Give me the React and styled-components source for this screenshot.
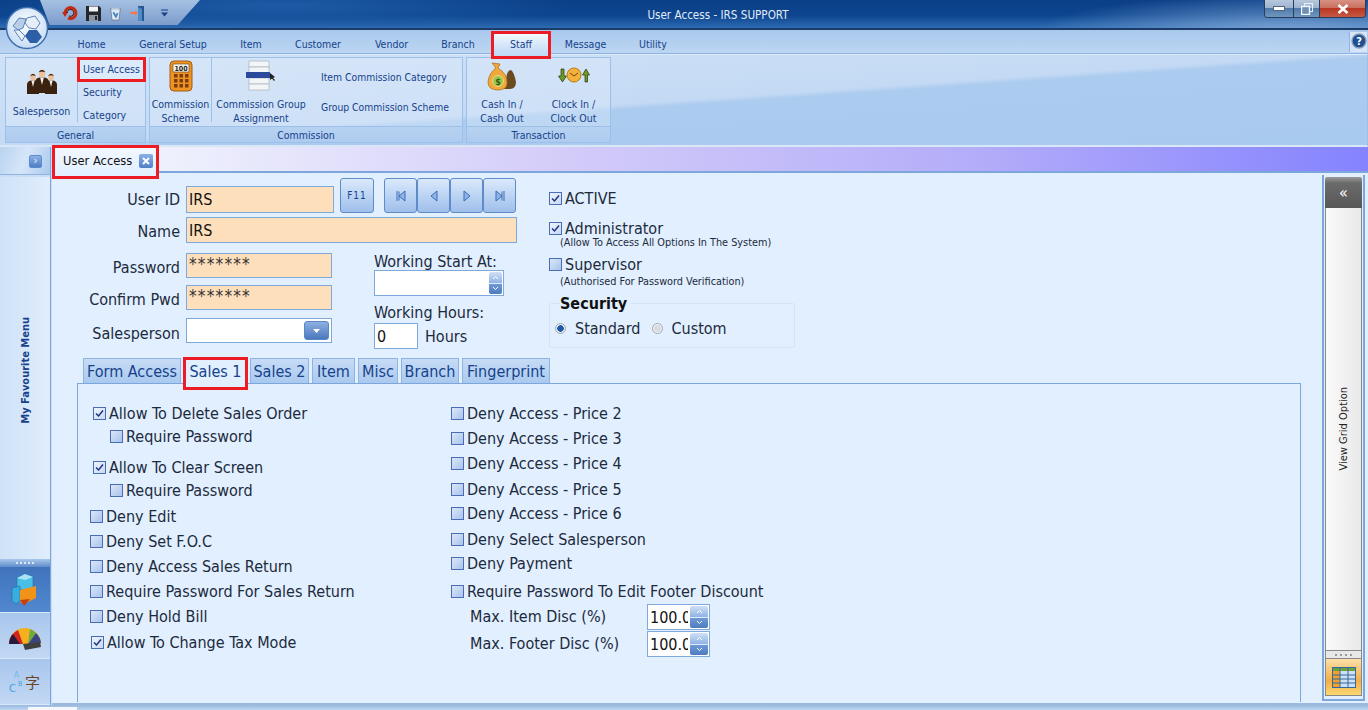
import React from "react";
import styled, { createGlobalStyle } from "styled-components";

const FONT = `"DejaVu Sans Condensed", "DejaVu Sans", "Noto Sans", sans-serif`;

const Global = createGlobalStyle`
  html, body {
    margin: 0;
    padding: 0;
    width: 1368px;
    height: 710px;
    overflow: hidden;
    font-family: ${FONT};
    font-stretch: condensed;
  }
  * { box-sizing: border-box; }
`;

const Window = styled.div`
  position: relative;
  width: 1368px;
  height: 710px;
  display: flex;
  flex-direction: column;
  overflow: hidden;
  background: #c9def5;
`;

/* ---------- title bar ---------- */

const TitleBar = styled.div`
  position: relative;
  height: 30px;
  flex: none;
  display: flex;
  align-items: flex-start;
  padding-left: 60px;
  background:
    radial-gradient(ellipse 260px 40px at 1290px 34px, #7ea7d6 0%, rgba(126, 167, 214, 0) 100%),
    radial-gradient(ellipse 300px 26px at 280px 6px, #1d5aa6 0%, rgba(29, 90, 166, 0) 100%),
    linear-gradient(180deg, #0b3f86 0%, #0d458f 55%, #2d6bb2 100%);
  border-bottom: 2px solid #1b3a66;
`;

const QuickAccess = styled.div`
  position: absolute;
  left: 40px;
  top: 0;
  width: 160px;
  height: 25px;
  background: linear-gradient(180deg, #a5c1e2 0%, #7c9ccb 100%);
  clip-path: polygon(0 0, 100% 0, 86% 100%, 6% 100%);
`;

const QuickIcons = styled.div`
  position: relative;
  display: flex;
  align-items: center;
  gap: 6px;
  height: 26px;
  padding-left: 2px;
`;

const QuickIcon = styled.svg`
  width: ${(p) => p.$w || 17}px;
  height: 17px;
  display: block;
  margin-left: ${(p) => p.$ml || 0}px;
`;

const WindowTitle = styled.div`
  position: absolute;
  left: 0;
  right: 0;
  top: 7px;
  padding-left: 68px;
  text-align: center;
  font-size: 11.6px;
  line-height: 16px;
  color: #e3ecfa;
`;

const WindowButtons = styled.div`
  position: relative;
  margin-left: auto;
  margin-right: 2px;
  display: flex;
  height: 18px;
  border: 1px solid #2a3e5c;
  border-top: 0;
  border-radius: 0 0 4px 4px;
  overflow: hidden;
`;

const WinButton = styled.div`
  width: ${(p) => p.$w}px;
  display: flex;
  align-items: center;
  justify-content: center;
  background: ${(p) =>
    p.$close
      ? "linear-gradient(180deg,#d99184 0%,#c8705e 45%,#b93722 50%,#c75a44 100%)"
      : "linear-gradient(180deg,#b6c8dd 0%,#9db4d0 45%,#4f7bab 50%,#6f96bf 100%)"};
  border-left: ${(p) => (p.$first ? "0" : "1px solid #2a3e5c")};
`;

const Orb = styled.svg`
  position: absolute;
  left: 5px;
  top: 6px;
  width: 44px;
  height: 44px;
`;

/* ---------- menu tabs ---------- */

const MenuBar = styled.div`
  height: 24px;
  flex: none;
  display: flex;
  align-items: stretch;
  padding: 2px 1px 0 62px;
  background: linear-gradient(180deg, #a8c8ec 0%, #bcd6f2 100%);
  border-bottom: 1px solid #8fb4e3;
`;

const MenuTab = styled.div`
  width: ${(p) => p.$w}px;
  display: flex;
  align-items: center;
  justify-content: center;
  padding-top: 3px;
  font-size: 10.5px;
  color: #15428b;
  position: relative;
  ${(p) =>
    p.$active &&
    `
    padding: 0 0 3px;
    margin-left: 1px;
    margin-right: -1px;
    background: linear-gradient(180deg,#f2f8fe 0%,#cfe2f8 60%,#bcd6f3 100%);
    border: 1px solid #9dbfe8;
    border-bottom: 0;
    outline: 3px solid #ed1c24;
    outline-offset: -1px;
    height: 24px;
    margin-top: 1px;
  `}
`;

const HelpButton = styled.div`
  margin-left: auto;
  width: 18px;
  height: 20px;
  padding: 1px;
  background: #d6e6f8;
  border-left: 1px solid #8fb4e3;
`;

/* ---------- ribbon ---------- */

const Ribbon = styled.div`
  height: 93px;
  flex: none;
  display: flex;
  gap: 3px;
  padding: 2px 5px 2px 5px;
  background: linear-gradient(176deg, #d0e2f7 0%, #c4daf4 50%, #abcbef 53%, #a9caef 100%);
  border: 1px solid #9dbfe8;
  border-top-color: #dcebfb;
  border-left: 0;
  border-bottom: 2px solid #d8e6f6;
`;

const Group = styled.div`
  width: ${(p) => p.$w}px;
  display: flex;
  flex-direction: column;
  border: 1px solid #9cc0ea;
  background: rgba(225, 238, 252, 0.35);
`;

const GroupBody = styled.div`
  flex: 1;
  display: flex;
  min-height: 0;
`;

const GroupCaption = styled.div`
  height: 16px;
  flex: none;
  text-align: center;
  font-size: 10.5px;
  line-height: 16px;
  color: #15428b;
  background: linear-gradient(180deg, #b7d2f1 0%, #aecbef 100%);
  border-top: 1px solid #9cc0ea;
`;

const BigButton = styled.div`
  width: ${(p) => p.$w}px;
  flex: none;
  display: flex;
  flex-direction: column;
  align-items: center;
  padding-top: ${(p) => p.$top || 0}px;
  font-size: 10.5px;
  line-height: 14px;
  text-align: center;
  color: #15428b;
  ${(p) => p.$sep && `border-right: 1px solid #9cc0ea; margin-bottom: 4px;`}
`;

const BigIcon = styled.svg`
  width: ${(p) => p.$size || 34}px;
  height: ${(p) => p.$size || 34}px;
  display: block;
  flex: none;
  margin-bottom: ${(p) => p.$mb || 0}px;
`;

const SmallList = styled.div`
  flex: 1;
  display: flex;
  flex-direction: column;
  align-items: stretch;
`;

const SmallItem = styled.div`
  height: 23px;
  line-height: 23px;
  padding-left: 5px;
  font-size: 10.5px;
  color: #15428b;
  white-space: nowrap;
  ${(p) =>
    p.$marked &&
    `
    height: 24px;
    outline: 3px solid #ed1c24;
    outline-offset: -2px;
    background: #dcebfb;
  `}
`;

const CommissionLinks = styled.div`
  flex: 1;
  display: flex;
  flex-direction: column;
  gap: 16px;
  padding: 12px 0 0 11px;
  font-size: 10.3px;
  line-height: 14px;
  color: #15428b;
  white-space: nowrap;
`;

/* ---------- workspace ---------- */

const Workspace = styled.div`
  flex: 1;
  display: flex;
  min-height: 0;
`;

const Footer = styled.div`
  height: 5px;
  flex: none;
  padding: 2px 0 0 28px;
  background: linear-gradient(180deg, #9ab9dd 0%, #bcd6f2 100%);
`;

const FooterTab = styled.div`
  width: 49px;
  height: 3px;
  background: #f4f8fd;
`;

const Sidebar = styled.div`
  width: 51px;
  flex: none;
  display: flex;
  flex-direction: column;
  border-right: 1px solid #7da6dc;
`;

const SidebarTop = styled.div`
  height: 28px;
  flex: none;
  display: flex;
  align-items: center;
  justify-content: flex-end;
  padding: 2px 8px 0 0;
  background: linear-gradient(110deg, #b9d3f0 0%, #d6e6f9 50%, #a9c9ee 100%);
  border-bottom: 1px solid #8fb4e3;
`;

const ExpandButton = styled.div`
  width: 13px;
  height: 13px;
  border-radius: 2px;
  background: linear-gradient(180deg, #8fb2e4 0%, #4d7fc6 100%);
  border: 1px solid #5d8ccc;
  color: #fff;
  font-size: 10px;
  line-height: 10px;
  text-align: center;
`;

const FavouriteBar = styled.div`
  flex: 1;
  display: flex;
  align-items: center;
  justify-content: center;
  margin-top: 2px;
  padding-top: 4px;
  background: linear-gradient(90deg, #cfe2f8 0%, #e0edfc 100%);
`;

const VerticalLabel = styled.div`
  writing-mode: vertical-rl;
  transform: rotate(180deg);
  font-size: 11px;
  font-weight: ${(p) => p.$weight || 400};
  color: ${(p) => p.$color || "#15428b"};
  white-space: nowrap;
`;

const Grip = styled.div`
  height: 8px;
  flex: none;
  display: flex;
  align-items: center;
  justify-content: center;
  gap: 2px;
  background: linear-gradient(180deg, #a9c7ec 0%, #5f8ccb 100%);
`;

const GripDot = styled.span`
  width: 2px;
  height: 2px;
  background: ${(p) => p.$color || "#dbe8f8"};
`;

const NavTile = styled.div`
  height: 46px;
  flex: none;
  display: flex;
  align-items: center;
  justify-content: center;
  border-bottom: 1px solid #d9e8fa;
  background: ${(p) =>
    p.$active
      ? "linear-gradient(180deg,#3f74bd 0%,#5288cf 100%)"
      : "linear-gradient(180deg,#a8c6ec 0%,#c2d8f4 100%)"};
`;

const TileIcon = styled.svg`
  width: 34px;
  height: 34px;
`;

const Content = styled.div`
  flex: 1;
  min-width: 0;
  display: flex;
  flex-direction: column;
  margin-left: 1px;
`;

const TabStrip = styled.div`
  height: 26px;
  flex: none;
  padding-left: 3px;
  background: linear-gradient(90deg, #eff1fd 8%, #d2cbf9 40%, #b4adf9 70%, #8583ff 100%);
  border-bottom: 2px solid #7da6dc;
`;

const DocTab = styled.div`
  width: 101px;
  height: 28px;
  margin-top: 1px;
  display: flex;
  align-items: center;
  gap: 7px;
  padding: 0 0 3px 8px;
  font-size: 12.8px;
  white-space: nowrap;
  color: #111;
  background: linear-gradient(180deg, #f1f7ff 0%, #e1efff 100%);
  outline: 3px solid #ed1c24;
  position: relative;
`;

const CloseBox = styled.span`
  width: 14px;
  height: 14px;
  flex: none;
  display: flex;
  align-items: center;
  justify-content: center;
  border-radius: 2px;
  background: linear-gradient(180deg, #8bb0e6 0%, #4f80c8 100%);
`;

const Body = styled.div`
  flex: 1;
  min-height: 0;
  display: flex;
  background: #e1efff;
  border-bottom: 2px solid #9ab9dd;
`;

const FormArea = styled.div`
  flex: 1;
  min-width: 0;
  display: flex;
  flex-direction: column;
`;

const TopForm = styled.div`
  height: 185px;
  flex: none;
  display: flex;
  padding-top: 5px;
`;

const LeftBlock = styled.div`
  width: 465px;
  flex: none;
  display: flex;
  flex-direction: column;
`;

const FormRow = styled.div`
  display: flex;
  align-items: ${(p) => p.$align || "center"};
  margin-top: ${(p) => p.$mt || 0}px;
  height: ${(p) => p.$h}px;
`;

const FieldLabel = styled.div`
  width: 128px;
  flex: none;
  text-align: right;
  margin-right: 6px;
  padding-top: ${(p) => p.$pt ?? 3}px;
  margin-bottom: ${(p) => p.$mb || 0}px;
  font-size: 16px;
  color: #1c2a3c;
  white-space: nowrap;
`;

const Field = styled.div`
  width: ${(p) => p.$w}px;
  height: ${(p) => p.$h}px;
  flex: none;
  display: flex;
  align-items: center;
  padding-left: 2px;
  font-size: 16px;
  color: #111;
  overflow: hidden;
  white-space: nowrap;
  background: ${(p) => (p.$peach ? "#fddfbc" : "#fff")};
  border: 1px solid #7fa8dc;
  position: relative;
`;

const Secret = styled.span`
  font-size: 17px;
  letter-spacing: 1.2px;
  line-height: 14px;
  margin-bottom: 3px;
  color: #333;
`;

const ClipValue = styled.span`
  width: 38px;
  overflow: hidden;
  flex: none;
`;

const ToolButton = styled.div`
  height: 35px;
  width: ${(p) => p.$w || 33}px;
  display: flex;
  align-items: center;
  justify-content: center;
  background: linear-gradient(180deg, #dbe9fb 0%, #bcd4f3 50%, #9fbfeb 100%);
  border: 1px solid #5f8bc9;
  border-radius: 3px;
  margin-left: ${(p) => p.$ml || 0}px;
  font-size: 10px;
  letter-spacing: 1px;
  color: #15428b;
`;

const NavGroup = styled.div`
  display: flex;
  margin-left: 10px;
`;

const NavIcon = styled.svg`
  width: 14px;
  height: 14px;
`;

const LowerForm = styled.div`
  display: flex;
  margin-top: 10px;
`;

const Credentials = styled.div`
  display: flex;
  flex-direction: column;
  gap: 7px;
`;

const WorkingCol = styled.div`
  margin-left: 42px;
  display: flex;
  flex-direction: column;
`;

const SmallHeading = styled.div`
  height: ${(p) => p.$h}px;
  font-size: 16px;
  line-height: 17px;
  color: #1c2a3c;
  margin-top: ${(p) => p.$mt || 0}px;
  white-space: nowrap;
`;

const Spin = styled.div`
  position: absolute;
  right: ${(p) => p.$r || 1}px;
  top: 1px;
  bottom: 1px;
  width: ${(p) => p.$w || 13}px;
  display: flex;
  flex-direction: column;
  border-radius: 2px;
  overflow: hidden;
`;

const SpinPart = styled.div`
  flex: 1;
  display: flex;
  align-items: center;
  justify-content: center;
  background: ${(p) =>
    p.$down
      ? "linear-gradient(180deg,#6f9ad6 0%,#4d7bbf 100%)"
      : "linear-gradient(180deg,#cfe0f7 0%,#8fb3e4 100%)"};
  border-bottom: ${(p) => (p.$down ? "0" : "1px solid #dfeafb")};
`;

const Combo = styled.div`
  position: absolute;
  right: 2px;
  top: 2px;
  bottom: 2px;
  width: 25px;
  display: flex;
  align-items: center;
  justify-content: center;
  border-radius: 3px;
  background: linear-gradient(180deg, #8eb0e2 0%, #4a78bc 100%);
  border: 1px solid #5b86c6;
`;

const HoursWrap = styled.div`
  display: flex;
  align-items: center;
  gap: 7px;
  font-size: 16px;
  color: #1c2a3c;
`;

const RightBlock = styled.div`
  width: 250px;
  margin-left: 32px;
  padding-top: 10px;
  display: flex;
  flex-direction: column;
`;

const CheckLine = styled.div`
  display: flex;
  align-items: center;
  gap: 3px;
  height: 20px;
  font-size: 16px;
  color: #1c2a3c;
  margin-top: ${(p) => p.$mt || 0}px;
  white-space: nowrap;
`;

const Note = styled.div`
  font-size: 10.8px;
  line-height: 12px;
  color: #1c2a3c;
  padding-left: 11px;
  white-space: nowrap;
  margin-top: ${(p) => p.$mt || 0}px;
`;

const Box = styled.span`
  width: 13px;
  height: 13px;
  flex: none;
  display: flex;
  align-items: center;
  justify-content: center;
  border: 1px solid #4a6cb4;
  background: ${(p) =>
    p.$checked
      ? "linear-gradient(135deg,#eef4fd 0%,#c6d8f3 100%)"
      : "linear-gradient(135deg,#dbe7f8 0%,#a9c3ec 100%)"};
`;

const SecurityBox = styled.fieldset`
  margin: 10px 0 0 0;
  padding: 0 0 0 5px;
  height: 50px;
  width: 246px;
  border: 1px solid #d3e2f5;
  border-radius: 3px;
  display: block;
  position: relative;
`;

const SecurityLegend = styled.legend`
  margin-left: 5px;
  padding: 0 4px 0 0;
  font-size: 16px;
  font-weight: 700;
  line-height: 11px;
  color: #111;
`;

const RadioRow = styled.div`
  display: flex;
  align-items: center;
  font-size: 16px;
  color: #1c2a3c;
  height: 20px;
  margin-top: 9px;
`;

const Radio = styled.span`
  width: 11px;
  height: 11px;
  flex: none;
  border-radius: 50%;
  margin-right: ${(p) => p.$mr}px;
  margin-left: ${(p) => p.$ml || 0}px;
  border: 1px solid #a0a7b0;
  background: ${(p) =>
    p.$on
      ? "radial-gradient(circle, #1f5aa8 0 3px, #e8eef6 3.5px)"
      : "radial-gradient(circle, #d8dce2 0 3px, #f0f2f5 4px)"};
`;

const SubTabs = styled.div`
  display: flex;
  height: 25px;
  flex: none;
  gap: 3px;
  margin-left: 31px;
`;

const SubTab = styled.div`
  width: ${(p) => p.$w}px;
  display: flex;
  align-items: center;
  justify-content: center;
  font-size: 16px;
  white-space: nowrap;
  color: #15428b;
  border: 1px solid #8fb4e3;
  border-bottom: 0;
  background: linear-gradient(180deg, #c7dcf6 0%, #a9c9ef 100%);
  position: relative;
  ${(p) =>
    p.$active &&
    `
    z-index: 1;
    outline: 3px solid #ed1c24;
    outline-offset: -2px;
    height: 31px;
    padding-bottom: 6px;
    background: #e1efff;
  `}
`;

const Panel = styled.div`
  flex: 1;
  min-height: 0;
  display: flex;
  margin: 0 21px 1px 25px;
  padding: 17px 0 0 12px;
  border: 1px solid #7da6dc;
  border-bottom: 0;
`;

const OptionCol = styled.div`
  width: ${(p) => p.$w}px;
  flex: none;
  display: flex;
  flex-direction: column;
`;

const OptionRow = styled.div`
  display: flex;
  align-items: flex-start;
  height: ${(p) => p.$h}px;
  padding-left: ${(p) => p.$indent || 0}px;
  font-size: 16px;
  color: #1c2a3c;
  white-space: nowrap;
`;

const OptionInner = styled.div`
  display: flex;
  align-items: center;
  gap: 3px;
  height: 24px;
`;

const MaxRow = styled.div`
  display: flex;
  align-items: flex-start;
  height: ${(p) => p.$h}px;
  padding-left: 19px;
  font-size: 16px;
  color: #1c2a3c;
  white-space: nowrap;
`;

const MaxLabel = styled.div`
  width: 177px;
  flex: none;
  line-height: 26px;
`;

const RightPanel = styled.div`
  width: 43px;
  flex: none;
  margin: 2px 3px 2px 0;
  display: flex;
  flex-direction: column;
  border: 2px solid #7da6dc;
  border-top-width: 0;
  padding: 2px 1px 3px 1px;
  background: #e1efff;
`;

const CollapseHead = styled.div`
  height: 31px;
  flex: none;
  display: flex;
  align-items: center;
  justify-content: center;
  border-radius: 2px 2px 0 0;
  background: linear-gradient(180deg, #9a9a9a 0%, #6b6b6b 20%, #575757 100%);
  color: #fff;
  font-size: 16px;
  line-height: 15px;
`;

const GridOption = styled.div`
  flex: 1;
  display: flex;
  align-items: center;
  justify-content: center;
  background: linear-gradient(90deg, #fafafa 0%, #e9e9e9 100%);
  border-left: 1px solid #888;
  border-right: 1px solid #888;
`;

const GreyGrip = styled.div`
  height: 8px;
  flex: none;
  display: flex;
  align-items: center;
  justify-content: center;
  gap: 3px;
  background: #e8e8e8;
  border: 1px solid #888;
  border-bottom: 0;
`;

const TableTile = styled.div`
  height: 38px;
  flex: none;
  display: flex;
  align-items: center;
  justify-content: center;
  background: linear-gradient(180deg, #fbe0a8 0%, #f2ae4a 60%, #fbd772 100%);
  border: 1px solid #888;
`;

const Tick = () => (
  <svg width="9" height="9" viewBox="0 0 9 9">
    <path d="M1 4.5 L3.5 7 L8 1.5" fill="none" stroke="#1d2f78" strokeWidth="1.4" />
  </svg>
);

const CheckBox = ({ checked }) => <Box $checked={checked}>{checked && <Tick />}</Box>;

const Chevron = ({ up, color = "#fff" }) => (
  <svg width="7" height="5" viewBox="0 0 7 5">
    <path d={up ? "M1 4 L3.5 1.5 L6 4" : "M1 1 L3.5 3.5 L6 1"} fill="none" stroke={color} strokeWidth="1" />
  </svg>
);

const SpinBox = ({ r, w }) => (
  <Spin $r={r} $w={w}>
    <SpinPart>
      <Chevron up />
    </SpinPart>
    <SpinPart $down>
      <Chevron />
    </SpinPart>
  </Spin>
);

const Man = ({ x, y, s = 1 }) => (
  <g transform={`translate(${x} ${y}) scale(${s})`}>
    <path d="M-6 20 L-6 11 Q-6 7 -2 6.5 L2 6.5 Q6 7 6 11 L6 20 Z" fill="#3a2110" />
    <path d="M-1.6 6.5 L0 13 L1.6 6.5 Z" fill="#f4efe6" />
    <ellipse cx="0" cy="3" rx="2.8" ry="3.4" fill="#eec198" />
    <path d="M-3 2 Q0 -2 3 2 Q0 0.6 -3 2 Z" fill="#1a0f07" />
  </g>
);

const MENU = [
  ["Home", 59],
  ["General Setup", 104],
  ["Item", 52],
  ["Customer", 82],
  ["Vendor", 65],
  ["Branch", 68],
  ["Staff", 56, true],
  ["Message", 75],
  ["Utility", 60],
];

const SUBTABS = [
  ["Form Access", 98],
  ["Sales 1", 63, true],
  ["Sales 2", 59],
  ["Item", 43],
  ["Misc", 40],
  ["Branch", 58],
  ["Fingerprint", 88],
];

const LEFT_OPTIONS = [
  { text: "Allow To Delete Sales Order", checked: true, indent: 3, h: 23 },
  { text: "Require Password", indent: 20, h: 31 },
  { text: "Allow To Clear Screen", checked: true, indent: 3, h: 23 },
  { text: "Require Password", indent: 20, h: 26 },
  { text: "Deny Edit", h: 25 },
  { text: "Deny Set F.O.C", h: 25 },
  { text: "Deny Access Sales Return", h: 25 },
  { text: "Require Password For Sales Return", h: 25 },
  { text: "Deny Hold Bill", h: 26 },
  { text: "Allow To Change Tax Mode", checked: true, indent: 1, h: 24 },
];

const RIGHT_OPTIONS = [
  ["Deny Access - Price 2", 25],
  ["Deny Access - Price 3", 25],
  ["Deny Access - Price 4", 26],
  ["Deny Access - Price 5", 24],
  ["Deny Access - Price 6", 26],
  ["Deny Select Salesperson", 24],
  ["Deny Payment", 28],
  ["Require Password To Edit Footer Discount", 25],
];

const App = () => (
  <Window>
    <Global />
    <TitleBar>
      <QuickAccess />
      <QuickIcons>
        <QuickIcon viewBox="0 0 17 17">
          <path d="M3 8a5.5 5.5 0 1 1 3 5" fill="none" stroke="#c62a12" strokeWidth="3" />
          <path d="M0 7 L6 7 L3 12 Z" fill="#c62a12" />
          <path d="M5 8a3.4 3.4 0 1 1 2 3" fill="none" stroke="#3a1008" strokeWidth="1" />
        </QuickIcon>
        <QuickIcon viewBox="0 0 17 17">
          <path d="M1 1 H14 L16 3 V16 H1 Z" fill="#23262d" />
          <rect x="4" y="1.5" width="9" height="5" fill="#f1f3f6" />
          <rect x="4" y="10" width="9" height="6" fill="#8f96a3" />
          <rect x="10" y="11" width="2" height="4" fill="#23262d" />
        </QuickIcon>
        <QuickIcon $w={15} viewBox="0 0 17 17">
          <path d="M3 3 H14 L12.5 16 H4.5 Z" fill="#dfe8f2" stroke="#6f8095" />
          <path d="M4 2 H13 V4 H4 Z" fill="#b8c6d6" />
          <path d="M6 7 L9 12 L11 8" fill="none" stroke="#3d87c8" strokeWidth="2" />
        </QuickIcon>
        <QuickIcon viewBox="0 0 17 17">
          <rect x="9" y="1" width="6" height="15" fill="#28588f" />
          <path d="M9 2 L13 4 V16 L9 16 Z" fill="#4f8ccd" />
          <path d="M1 7 H6 V5 L9 8 L6 11 V9 H1 Z" fill="#ef7a5a" />
        </QuickIcon>
        <QuickIcon $ml={4} viewBox="0 0 17 17">
          <path d="M5 5 H12" stroke="#1d3f86" strokeWidth="1" />
          <path d="M5 7.5 H12 L8.5 11.5 Z" fill="#1d3f86" />
        </QuickIcon>
      </QuickIcons>
      <WindowTitle>User Access - IRS SUPPORT</WindowTitle>
      <WindowButtons>
        <WinButton $w={28} $first>
          <svg width="12" height="5" viewBox="0 0 12 5">
            <rect x="0.5" y="0.5" width="11" height="4" fill="#fff" stroke="#54657c" />
          </svg>
        </WinButton>
        <WinButton $w={26}>
          <svg width="12" height="12" viewBox="0 0 12 12">
            <rect x="3.5" y="0.5" width="8" height="8" fill="none" stroke="#e9eff7" />
            <rect x="0.5" y="3.5" width="8" height="8" fill="#6f8fb4" stroke="#f4f7fb" strokeWidth="1.4" />
          </svg>
        </WinButton>
        <WinButton $w={46} $close>
          <svg width="12" height="10" viewBox="0 0 12 10">
            <path d="M1.5 1 L10.5 9 M10.5 1 L1.5 9" stroke="#fff" strokeWidth="2.6" />
          </svg>
        </WinButton>
      </WindowButtons>
    </TitleBar>

    <MenuBar>
      {MENU.map(([label, w, active]) => (
        <MenuTab key={label} $w={w} $active={active}>
          {label}
        </MenuTab>
      ))}
      <HelpButton>
        <svg width="16" height="16" viewBox="0 0 16 16">
          <circle cx="8" cy="8" r="7" fill="#1d4f92" stroke="#8b9db4" strokeWidth="1.4" />
          <text x="8" y="12" textAnchor="middle" fontSize="11" fontWeight="700" fill="#fff">
            ?
          </text>
        </svg>
      </HelpButton>
    </MenuBar>

    <Ribbon>
      <Group $w={141}>
        <GroupBody>
          <BigButton $w={72} $sep $top={5}>
            <BigIcon $size={34} $mb={7} viewBox="0 0 34 34">
              <Man x={8} y={11} />
              <Man x={26} y={11} />
              <Man x={17} y={7} s={1.15} />
            </BigIcon>
            Salesperson
          </BigButton>
          <SmallList>
            <SmallItem $marked>User Access</SmallItem>
            <SmallItem>Security</SmallItem>
            <SmallItem>Category</SmallItem>
          </SmallList>
        </GroupBody>
        <GroupCaption>General</GroupCaption>
      </Group>

      <Group $w={314}>
        <GroupBody>
          <BigButton $w={62} $sep $top={2}>
            <BigIcon $size={32} $mb={5} viewBox="0 0 32 32">
              <rect x="5" y="1" width="22" height="30" rx="4" fill="#ee9325" stroke="#a55a10" />
              <rect x="8" y="4" width="16" height="8" fill="#f4f4ec" stroke="#5a4420" strokeWidth="0.6" />
              <text x="16" y="10.5" textAnchor="middle" fontSize="7" fontWeight="700" fill="#222">
                100
              </text>
              <g fill="#7a3d0d">
                {[14, 19, 24].map((y) =>
                  [9, 14.5, 20].map((x) => <rect key={`${x}${y}`} x={x} y={y} width="3.5" height="3.5" />)
                )}
              </g>
            </BigIcon>
            Commission
            <br />
            Scheme
          </BigButton>
          <BigButton $w={98} $top={2}>
            <BigIcon $size={32} $mb={5} viewBox="0 0 32 32">
              <g fill="#f3f5f7" stroke="#aab2bd" strokeWidth="0.7">
                <rect x="4" y="1" width="20" height="6" />
                <rect x="4" y="7" width="20" height="6" />
                <rect x="4" y="18" width="20" height="6" />
                <rect x="4" y="24" width="20" height="6" />
              </g>
              <rect x="1" y="12" width="24" height="6" fill="#2b4a9b" />
              <path d="M25 13 L25 20 L27 18.5 L29 21 L30 20 L28 18 L30 17 Z" fill="#222" />
            </BigIcon>
            Commission Group
            <br />
            Assignment
          </BigButton>
          <CommissionLinks>
            <span>Item Commission Category</span>
            <span>Group Commission Scheme</span>
          </CommissionLinks>
        </GroupBody>
        <GroupCaption>Commission</GroupCaption>
      </Group>

      <Group $w={145}>
        <GroupBody>
          <BigButton $w={70} $top={2}>
            <BigIcon $size={32} $mb={5} viewBox="0 0 32 32">
              <path d="M21 14 Q22 10 25 10 Q28 12 30 22 Q30 29 24 29 H18 Z" fill="#6b4a22" />
              <path d="M6 3 L14 4 L12 8 Q22 14 21 24 Q20 30 12 30 Q2 30 2 22 Q3 13 10 8 Z" fill="#f0a93a" stroke="#a86a14" strokeWidth="0.7" />
              <circle cx="12" cy="21" r="5.5" fill="#9fc74c" stroke="#e9d98c" />
              <text x="12" y="24.5" textAnchor="middle" fontSize="9" fontWeight="700" fill="#355c14">
                $
              </text>
            </BigIcon>
            Cash In /
            <br />
            Cash Out
          </BigButton>
          <BigButton $w={73} $top={2}>
            <BigIcon $size={32} $mb={5} viewBox="0 0 32 32">
              <path d="M3 9 V16 H0.5 L4.5 22 L8.5 16 H6 V9 Z" fill="#6f9a22" stroke="#26340d" strokeWidth="0.7" />
              <circle cx="16" cy="15" r="7" fill="#f4b23a" stroke="#b87b14" />
              <path d="M12 13 L16 16 L20 13" fill="none" stroke="#6c4408" strokeWidth="1" />
              <path d="M27 22 V15 H24.5 L28 9 L31.5 15 H29.5 V22 Z" fill="#6f9a22" stroke="#26340d" strokeWidth="0.7" />
            </BigIcon>
            Clock In /
            <br />
            Clock Out
          </BigButton>
        </GroupBody>
        <GroupCaption>Transaction</GroupCaption>
      </Group>
    </Ribbon>

    <Workspace>
      <Sidebar>
        <SidebarTop>
          <ExpandButton>›</ExpandButton>
        </SidebarTop>
        <FavouriteBar>
          <VerticalLabel $weight={700}>My Favourite Menu</VerticalLabel>
        </FavouriteBar>
        <Grip>
          {[0, 1, 2, 3, 4].map((i) => (
            <GripDot key={i} />
          ))}
        </Grip>
        <NavTile $active>
          <TileIcon viewBox="0 0 34 34">
            <path d="M9 5 L17 1 L25 4 V14 L17 18 L9 15 Z" fill="#49bfe8" stroke="#1b6f9e" strokeWidth="0.6" />
            <path d="M17 1 L25 4 L17 7 L9 5 Z" fill="#a9e4f6" />
            <path d="M4 15 L12 13 V28 L8 31 L4 28 Z" fill="#38aede" stroke="#1b6f9e" strokeWidth="0.6" />
            <path d="M12 17 L28 13 V25 L16 31 L12 29 Z" fill="#f09316" />
            <path d="M12 27 L22 26 L16 33 Z" fill="#c43f14" />
          </TileIcon>
        </NavTile>
        <NavTile>
          <TileIcon viewBox="0 0 34 34">
            <path d="M1 25 A16 16 0 0 1 33 25 L28 29 L20 29 L17 25 Z" fill="#f5b01f" />
            <path d="M1 25 A16 16 0 0 1 10 11 L15 25 Z" fill="#d1261e" />
            <path d="M1 25 A16 16 0 0 1 5 15 L12 25 Z" fill="#2a1a3e" />
            <path d="M22 10 A16 16 0 0 1 28 14 L20 25 Z" fill="#6cab3e" />
            <path d="M28 14 A16 16 0 0 1 33 24 L20 25 Z" fill="#39457f" />
            <path d="M15 25 L32 23 L33 28 L17 31 Z" fill="#3f3f3f" />
          </TileIcon>
        </NavTile>
        <NavTile>
          <TileIcon viewBox="0 0 34 34">
            <text x="6" y="13" fontSize="8" fill="#68b7e8">A</text>
            <text x="10" y="21" fontSize="7" fill="#3fa2e0">B</text>
            <text x="1" y="27" fontSize="11" fill="#3fa2e0">C</text>
            <text x="17" y="23" fontSize="15" fontFamily="'Noto Sans CJK SC', sans-serif" fill="#6b4426">字</text>
          </TileIcon>
        </NavTile>
      </Sidebar>

      <Content>
        <TabStrip>
          <DocTab>
            User Access
            <CloseBox>
              <svg width="8" height="8" viewBox="0 0 8 8">
                <path d="M1 1 L7 7 M7 1 L1 7" stroke="#fff" strokeWidth="2" />
              </svg>
            </CloseBox>
          </DocTab>
        </TabStrip>
        <Body>
          <FormArea>
            <TopForm>
              <LeftBlock>
                <FormRow $h={35} $align="flex-end">
                  <FieldLabel $pt={0} $mb={4}>User ID</FieldLabel>
                  <Field $w={148} $h={27} $peach>
                    IRS
                  </Field>
                  <ToolButton $ml={6} $w={34}>F11</ToolButton>
                  <NavGroup>
                    <ToolButton>
                      <NavIcon viewBox="0 0 14 14">
                        <path d="M3 2 V12 M5 2.5 V11.5 M11 2 L5 7 L11 12 Z" stroke="#3a6cb8" fill="#8fb4e6" />
                      </NavIcon>
                    </ToolButton>
                    <ToolButton>
                      <NavIcon viewBox="0 0 14 14">
                        <path d="M10 2 L4 7 L10 12 Z" stroke="#3a6cb8" fill="#8fb4e6" />
                      </NavIcon>
                    </ToolButton>
                    <ToolButton>
                      <NavIcon viewBox="0 0 14 14">
                        <path d="M4 2 L10 7 L4 12 Z" stroke="#3a6cb8" fill="#8fb4e6" />
                      </NavIcon>
                    </ToolButton>
                    <ToolButton>
                      <NavIcon viewBox="0 0 14 14">
                        <path d="M11 2 V12 M9 2.5 V11.5 M3 2 L9 7 L3 12 Z" stroke="#3a6cb8" fill="#8fb4e6" />
                      </NavIcon>
                    </ToolButton>
                  </NavGroup>
                </FormRow>
                <FormRow $h={26} $mt={4}>
                  <FieldLabel>Name</FieldLabel>
                  <Field $w={331} $h={26} $peach>
                    IRS
                  </Field>
                </FormRow>
                <LowerForm>
                  <Credentials>
                    <FormRow $h={25}>
                      <FieldLabel>Password</FieldLabel>
                      <Field $w={146} $h={25} $peach>
                        <Secret>*******</Secret>
                      </Field>
                    </FormRow>
                    <FormRow $h={25}>
                      <FieldLabel>Confirm Pwd</FieldLabel>
                      <Field $w={146} $h={25} $peach>
                        <Secret>*******</Secret>
                      </Field>
                    </FormRow>
                    <FormRow $h={25} $mt={1}>
                      <FieldLabel $pt={5}>Salesperson</FieldLabel>
                      <Field $w={146} $h={25}>
                        <Combo>
                          <svg width="7" height="4" viewBox="0 0 7 4">
                            <path d="M0 0 H7 L3.5 4 Z" fill="#fff" />
                          </svg>
                        </Combo>
                      </Field>
                    </FormRow>
                  </Credentials>
                  <WorkingCol>
                    <SmallHeading $h={17}>Working Start At:</SmallHeading>
                    <Field $w={130} $h={26}>
                      <SpinBox />
                    </Field>
                    <SmallHeading $h={19} $mt={8}>Working Hours:</SmallHeading>
                    <HoursWrap>
                      <Field $w={44} $h={26}>0</Field>
                      Hours
                    </HoursWrap>
                  </WorkingCol>
                </LowerForm>
              </LeftBlock>
              <RightBlock>
                <CheckLine>
                  <CheckBox checked />
                  ACTIVE
                </CheckLine>
                <CheckLine $mt={10}>
                  <CheckBox checked />
                  Administrator
                </CheckLine>
                <Note $mt={-1}>(Allow To Access All Options In The System)</Note>
                <CheckLine $mt={5}>
                  <CheckBox />
                  Supervisor
                </CheckLine>
                <Note $mt={2}>(Authorised For Password Verification)</Note>
                <SecurityBox>
                  <SecurityLegend>Security</SecurityLegend>
                  <RadioRow>
                    <Radio $on $mr={9} />
                    Standard
                    <Radio $ml={12} $mr={8} />
                    Custom
                  </RadioRow>
                </SecurityBox>
              </RightBlock>
            </TopForm>

            <SubTabs>
              {SUBTABS.map(([label, w, active]) => (
                <SubTab key={label} $w={w} $active={active}>
                  {label}
                </SubTab>
              ))}
            </SubTabs>
            <Panel>
              <OptionCol $w={361}>
                {LEFT_OPTIONS.map((o, i) => (
                  <OptionRow key={i} $h={o.h} $indent={o.indent}>
                    <OptionInner>
                      <CheckBox checked={o.checked} />
                      {o.text}
                    </OptionInner>
                  </OptionRow>
                ))}
              </OptionCol>
              <OptionCol $w={330}>
                {RIGHT_OPTIONS.map(([text, h]) => (
                  <OptionRow key={text} $h={h}>
                    <OptionInner>
                      <CheckBox />
                      {text}
                    </OptionInner>
                  </OptionRow>
                ))}
                {["Max. Item Disc (%)", "Max. Footer Disc (%)"].map((text) => (
                  <MaxRow key={text} $h={27}>
                    <MaxLabel>{text}</MaxLabel>
                    <Field $w={63} $h={26}>
                      <ClipValue>100.0</ClipValue>
                      <SpinBox r={1} w={18} />
                    </Field>
                  </MaxRow>
                ))}
              </OptionCol>
            </Panel>
          </FormArea>

          <RightPanel>
            <CollapseHead>«</CollapseHead>
            <GridOption>
              <VerticalLabel $color="#222">View Grid Option</VerticalLabel>
            </GridOption>
            <GreyGrip>
              {[0, 1, 2, 3].map((i) => (
                <GripDot key={i} $color="#9a9a9a" />
              ))}
            </GreyGrip>
            <TableTile>
              <svg width="24" height="21" viewBox="0 0 24 21">
                <rect x="0.5" y="0.5" width="23" height="20" fill="#cfe0f4" stroke="#33689f" />
                <rect x="1" y="1" width="22" height="3" fill="#6ba03a" />
                <rect x="1" y="4" width="7" height="16" fill="#f0a12e" />
                <path d="M8 1 V20 M16 1 V20 M1 8 H23 M1 12 H23 M1 16 H23" stroke="#33689f" fill="none" />
              </svg>
            </TableTile>
          </RightPanel>
        </Body>
      </Content>
    </Workspace>
    <Footer>
      <FooterTab />
    </Footer>
    <Orb viewBox="0 0 44 44">
      <defs>
        <radialGradient id="orbFill" cx="50%" cy="40%" r="60%">
          <stop offset="0%" stopColor="#ffffff" />
          <stop offset="100%" stopColor="#c5dcf4" />
        </radialGradient>
      </defs>
      <circle cx="22" cy="22" r="20.5" fill="url(#orbFill)" stroke="#3f70ad" strokeWidth="1.5" />
      <path d="M8 20 L14 12 L21 13 L18 22 L13 24 Z" fill="#b9cde6" stroke="#5c84b8" />
      <path d="M14 31 L9 24 L14 24 L20 30 L17 35 Z" fill="#e8eff8" stroke="#5c84b8" />
      <path d="M22 12 L30 10 L35 17 L31 23 L24 22 L20 17 Z" fill="#e6eef8" stroke="#5c84b8" />
      <path d="M24 24 L32 24 L37 31 L32 37 L25 37 L20 30 Z" fill="#2d5fa6" />
    </Orb>
  </Window>
);

export default App;
